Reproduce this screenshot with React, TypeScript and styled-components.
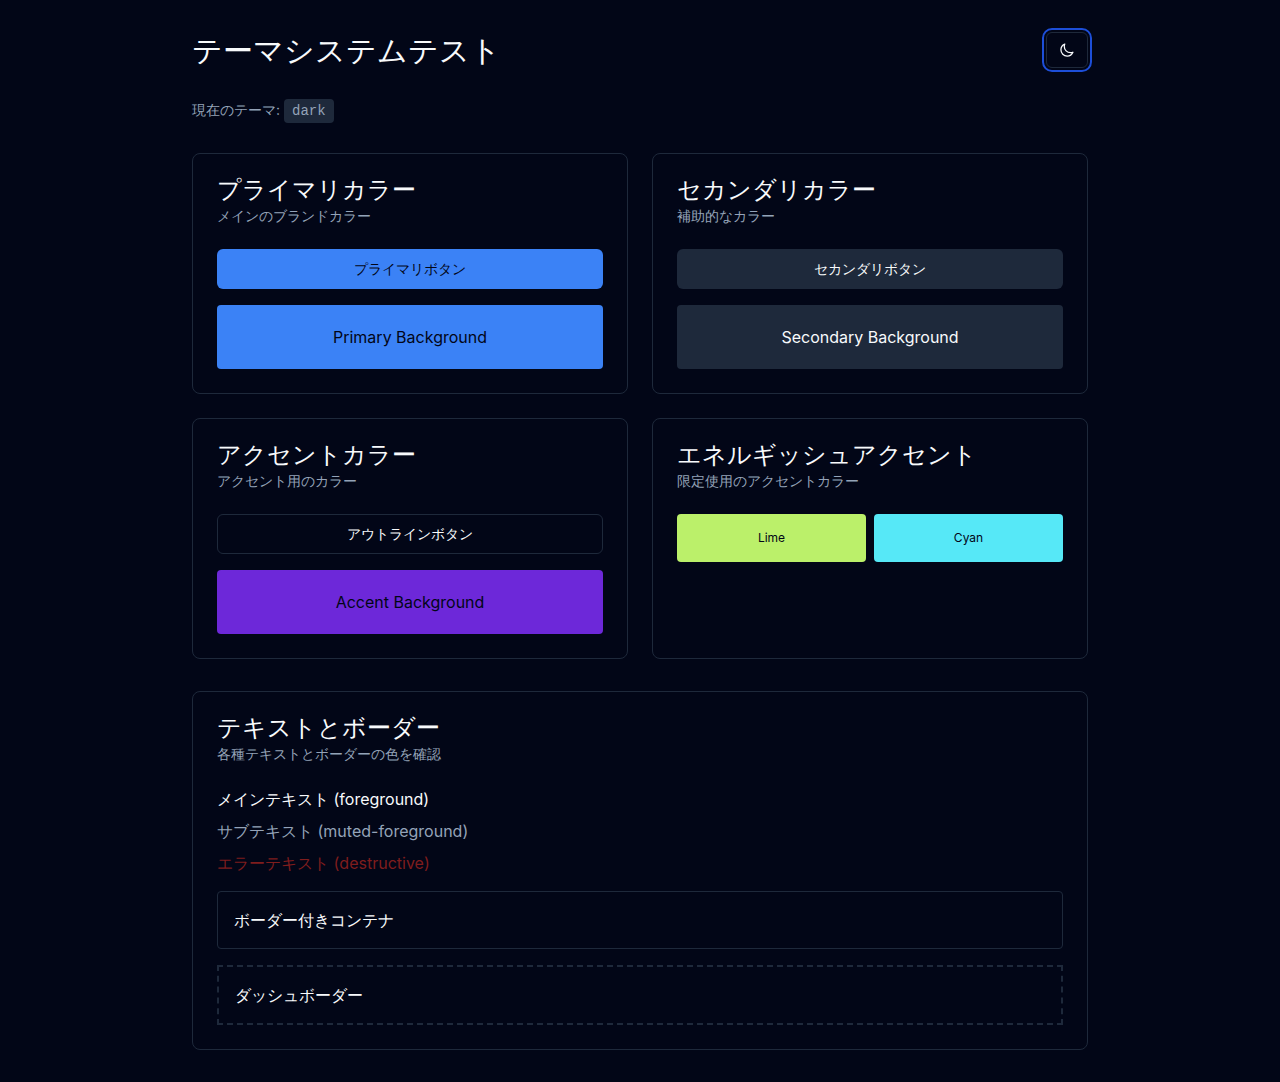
import React, { useState } from "react";
import styled, { createGlobalStyle, css } from "styled-components";

const color = {
  background: "#020617",
  foreground: "#f8fafc",
  surface: "#1e293b",
  muted: "#94a3b8",
  primary: "#3b82f6",
  accent: "#6d28d9",
  destructive: "#7f1d1d",
  lime: "#bbf06a",
  cyan: "#56e8f7",
  ring: "#1d4ed8",
};

const GlobalStyle = createGlobalStyle`
  *, *::before, *::after { box-sizing: border-box; }
  body {
    margin: 0;
    background: ${color.background};
    color: ${color.foreground};
    font-family: Inter, sans-serif;
    font-size: 16px;
    line-height: 24px;
  }
  h1, h2, p { margin: 0; font-weight: 400; }
  button { font: inherit; cursor: pointer; }
`;

const Page = styled.div`
  min-height: 100vh;
  padding: 32px;
`;

const Container = styled.main`
  max-width: 896px;
  margin: 0 auto;
  display: flex;
  flex-direction: column;
  gap: 32px;
`;

const Header = styled.header`
  display: flex;
  align-items: center;
  justify-content: space-between;
`;

const PageTitle = styled.h1`
  font-size: 30px;
  line-height: 36px;
`;

const ThemeToggle = styled.button`
  display: flex;
  align-items: center;
  justify-content: center;
  width: 42px;
  height: 36px;
  padding: 0;
  color: ${color.foreground};
  background: ${color.background};
  border: 1px solid ${color.surface};
  border-radius: 6px;
  outline: 2px solid ${color.ring};
  outline-offset: 2px;
`;

const CurrentTheme = styled.p`
  color: ${color.muted};
  font-size: 14px;
  line-height: 20px;
`;

const Code = styled.code`
  padding: 4px 8px;
  background: ${color.surface};
  border-radius: 4px;
  font-family: "Liberation Mono", monospace;
  font-size: 14px;
`;

const CardGrid = styled.div`
  display: grid;
  grid-template-columns: repeat(auto-fit, minmax(320px, 1fr));
  gap: 24px;
`;

const CardFrame = styled.section`
  padding: 24px;
  border: 1px solid ${color.surface};
  border-radius: 8px;
`;

const CardHeader = styled.div`
  margin-bottom: 23px;
`;

const CardTitle = styled.h2`
  font-size: 24px;
  line-height: 24px;
  margin-bottom: 4px;
`;

const CardDescription = styled.p`
  color: ${color.muted};
  font-size: 14px;
  line-height: 20px;
`;

const Stack = styled.div<{ $gap: number }>`
  display: flex;
  flex-direction: column;
  gap: ${(p) => p.$gap}px;
`;

type Variant = "primary" | "secondary" | "outline";

const variants = {
  primary: css`
    color: ${color.background};
    background: ${color.primary};
    border: 0;
  `,
  secondary: css`
    color: ${color.foreground};
    background: ${color.surface};
    border: 0;
  `,
  outline: css`
    color: ${color.foreground};
    background: transparent;
    border: 1px solid ${color.surface};
  `,
};

const Button = styled.button<{ $variant: Variant }>`
  width: 100%;
  height: 40px;
  padding: 0 16px;
  border-radius: 6px;
  && {
    font-size: 14px;
    line-height: 20px;
  }
  ${(p) => variants[p.$variant]}
`;

const Swatch = styled.div<{ $bg: string; $fg?: string; $small?: boolean }>`
  padding: ${(p) => (p.$small ? "16px" : "20px 16px")};
  border-radius: 4px;
  text-align: center;
  background: ${(p) => p.$bg};
  color: ${(p) => p.$fg ?? color.background};
  font-size: ${(p) => (p.$small ? 12 : 16)}px;
  line-height: ${(p) => (p.$small ? 16 : 24)}px;
`;

const SwatchPair = styled.div`
  display: grid;
  grid-template-columns: 1fr 1fr;
  gap: 8px;
`;

const Text = styled.p<{ $color: string }>`
  color: ${(p) => p.$color};
`;

const Bordered = styled.div<{ $dashed?: boolean }>`
  padding: 16px;
  border: ${(p) => (p.$dashed ? "2px dashed" : "1px solid")} ${color.surface};
  border-radius: ${(p) => (p.$dashed ? 0 : 4)}px;
`;

function Card({ title, description, children }: { title: string; description: string; children: React.ReactNode }) {
  return (
    <CardFrame>
      <CardHeader>
        <CardTitle>{title}</CardTitle>
        <CardDescription>{description}</CardDescription>
      </CardHeader>
      {children}
    </CardFrame>
  );
}

const MoonIcon = () => (
  <svg width="16" height="16" viewBox="0 -1 25 25" fill="none" stroke="currentColor" strokeWidth="2" strokeLinecap="round" strokeLinejoin="round" aria-hidden="true">
    <path d="M21.752 15.002A9.718 9.718 0 0 1 18 15.75c-5.385 0-9.75-4.365-9.75-9.75 0-1.33.266-2.597.748-3.752A9.753 9.753 0 0 0 3 11.25C3 16.635 7.365 21 12.75 21a9.753 9.753 0 0 0 9.002-5.998Z" />
  </svg>
);

export default function App() {
  const [theme, setTheme] = useState("dark");
  return (
    <>
      <GlobalStyle />
      <Page>
        <Container>
          <Header>
            <PageTitle>テーマシステムテスト</PageTitle>
            <ThemeToggle
              type="button"
              aria-label="テーマ切り替え"
              onClick={() => setTheme(theme === "dark" ? "light" : "dark")}
            >
              <MoonIcon />
            </ThemeToggle>
          </Header>
          <CurrentTheme>
            現在のテーマ: <Code>{theme}</Code>
          </CurrentTheme>
          <CardGrid>
            <Card title="プライマリカラー" description="メインのブランドカラー">
              <Stack $gap={16}>
                <Button type="button" $variant="primary">プライマリボタン</Button>
                <Swatch $bg={color.primary}>Primary Background</Swatch>
              </Stack>
            </Card>
            <Card title="セカンダリカラー" description="補助的なカラー">
              <Stack $gap={16}>
                <Button type="button" $variant="secondary">セカンダリボタン</Button>
                <Swatch $bg={color.surface} $fg={color.foreground}>Secondary Background</Swatch>
              </Stack>
            </Card>
            <Card title="アクセントカラー" description="アクセント用のカラー">
              <Stack $gap={16}>
                <Button type="button" $variant="outline">アウトラインボタン</Button>
                <Swatch $bg={color.accent}>Accent Background</Swatch>
              </Stack>
            </Card>
            <Card title="エネルギッシュアクセント" description="限定使用のアクセントカラー">
              <SwatchPair>
                <Swatch $bg={color.lime} $small>Lime</Swatch>
                <Swatch $bg={color.cyan} $small>Cyan</Swatch>
              </SwatchPair>
            </Card>
          </CardGrid>
          <Card title="テキストとボーダー" description="各種テキストとボーダーの色を確認">
            <Stack $gap={16}>
              <Stack $gap={8}>
                <Text $color={color.foreground}>メインテキスト (foreground)</Text>
                <Text $color={color.muted}>サブテキスト (muted-foreground)</Text>
                <Text $color={color.destructive}>エラーテキスト (destructive)</Text>
              </Stack>
              <Bordered>ボーダー付きコンテナ</Bordered>
              <Bordered $dashed>ダッシュボーダー</Bordered>
            </Stack>
          </Card>
        </Container>
      </Page>
    </>
  );
}
